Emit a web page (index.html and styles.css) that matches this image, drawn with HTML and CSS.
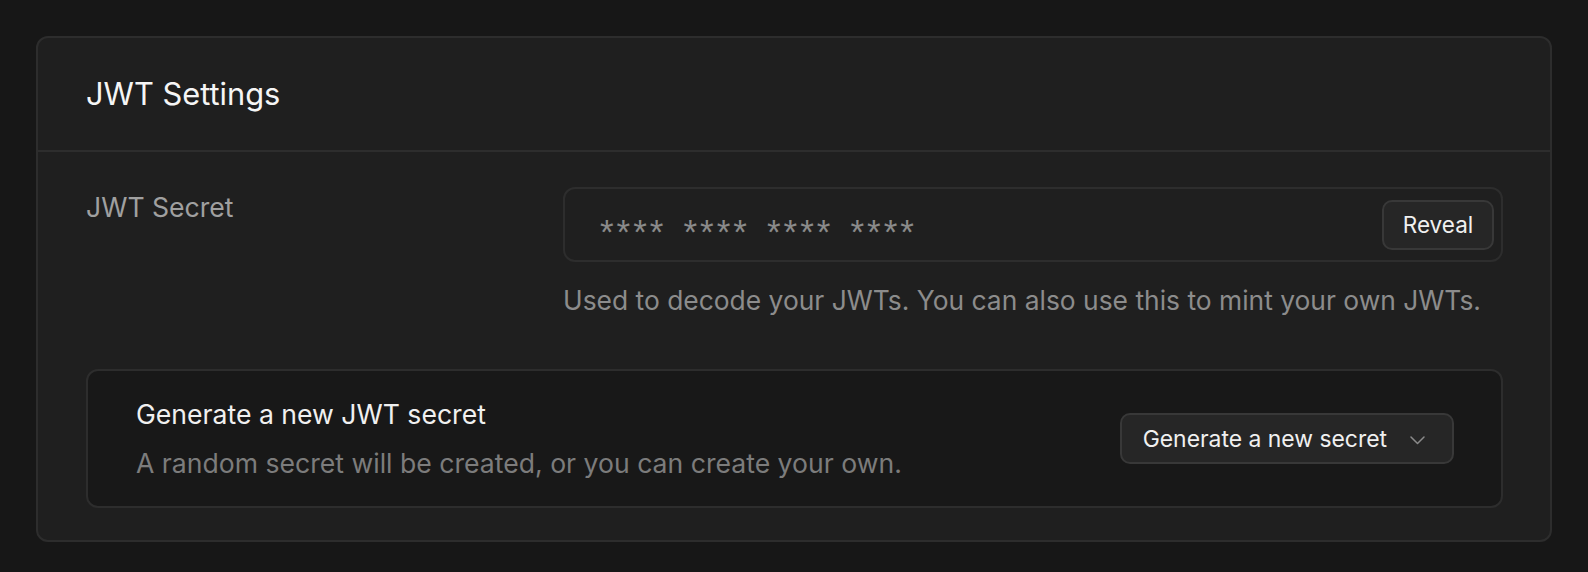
FILE: index.html
```html
<!DOCTYPE html>
<html>
<head>
<meta charset="utf-8">
<link rel="stylesheet" href="styles.css">
</head>
<body>
<div class="page">
  <section class="card">
    <header class="card-header">
      <h1 class="card-title">JWT Settings</h1>
    </header>
    <div class="card-body">
      <div class="field-row">
        <label class="field-label">JWT Secret</label>
        <div class="field-control">
          <div class="secret-input">
            <span class="secret-mask"><span class="mask-group">****</span><span class="mask-group">****</span><span class="mask-group">****</span><span class="mask-group">****</span></span>
            <button class="btn reveal-btn">Reveal</button>
          </div>
          <p class="field-help">Used to decode your JWTs. You can also use this to mint your own JWTs.</p>
        </div>
      </div>
      <div class="generate-box">
        <div class="generate-text">
          <div class="generate-title">Generate a new JWT secret</div>
          <div class="generate-desc">A random secret will be created, or you can create your own.</div>
        </div>
        <button class="btn dropdown-btn">
          <span>Generate a new secret</span>
          <svg class="chevron" width="15" height="10" viewBox="0 0 15 10" fill="none" stroke="currentColor" stroke-width="1.5" stroke-linecap="round" stroke-linejoin="round"><polyline points="1 2 7.5 8.5 14 2"></polyline></svg>
        </button>
      </div>
    </div>
  </section>
</div>
</body>
</html>
```
FILE: styles.css
```css
* { box-sizing: border-box; }
html, body {
  margin: 0;
  padding: 0;
  background: #171717;
  font-family: "Inter", "Noto Sans", sans-serif;
  color: #ededed;
}
.page {
  padding: 36px;
}
.card {
  background: #1f1f1f;
  border: 2px solid #2d2d2d;
  border-radius: 12px;
}
.card-header {
  height: 114px;
  display: flex;
  align-items: center;
  padding: 0 48px;
  border-bottom: 2px solid #2d2d2d;
}
.card-title {
  margin: 0;
  font-size: 30.8px;
  line-height: 38px;
  font-weight: 400;
  color: #f5f5f5;
}
.card-body {
  padding: 35px 47px 32px 48px;
}
.field-row {
  display: flex;
}
.field-label {
  width: 477px;
  flex-shrink: 0;
  font-size: 26.6px;
  line-height: 32px;
  color: #a0a0a0;
  padding-top: 4px;
}
.field-control {
  flex: 1;
}
.secret-input {
  height: 75px;
  border: 2px solid #2d2d2d;
  border-radius: 12px;
  background: #1f1f1f;
  display: flex;
  align-items: center;
  justify-content: space-between;
  padding: 0 7px 0 35px;
}
.secret-mask {
  display: flex;
  gap: 17px;
  font-family: "Liberation Sans", Arial, sans-serif;
  font-size: 35px;
  line-height: 36px;
  letter-spacing: 3px;
  color: #8a8a8a;
  padding-top: 15px;
}
.btn {
  font-family: inherit;
  background: #262626;
  border: 2px solid #383838;
  color: #f0f0f0;
  border-radius: 10px;
  cursor: pointer;
}
.reveal-btn {
  height: 50px;
  width: 112px;
  padding: 0;
  font-size: 22.5px;
}
.field-help {
  margin: 22px 0 0 0;
  font-size: 26.4px;
  line-height: 32px;
  color: #8c8c8c;
}
.generate-box {
  margin-top: 53px;
  background: #181818;
  border: 2px solid #2d2d2d;
  border-radius: 12px;
  height: 139px;
  display: flex;
  align-items: center;
  justify-content: space-between;
  padding: 0 47px 0 48px;
}
.generate-title {
  font-size: 26.6px;
  line-height: 32px;
  color: #f0f0f0;
}
.generate-desc {
  font-size: 26.6px;
  line-height: 32px;
  color: #7c7c7c;
  margin-top: 17px;
}
.dropdown-btn {
  height: 51px;
  padding: 0 27px 0 21px;
  font-size: 22.9px;
  display: flex;
  align-items: center;
  gap: 23px;
}
.chevron {
  color: #8a8a8a;
  margin-top: 2px;
}
```
